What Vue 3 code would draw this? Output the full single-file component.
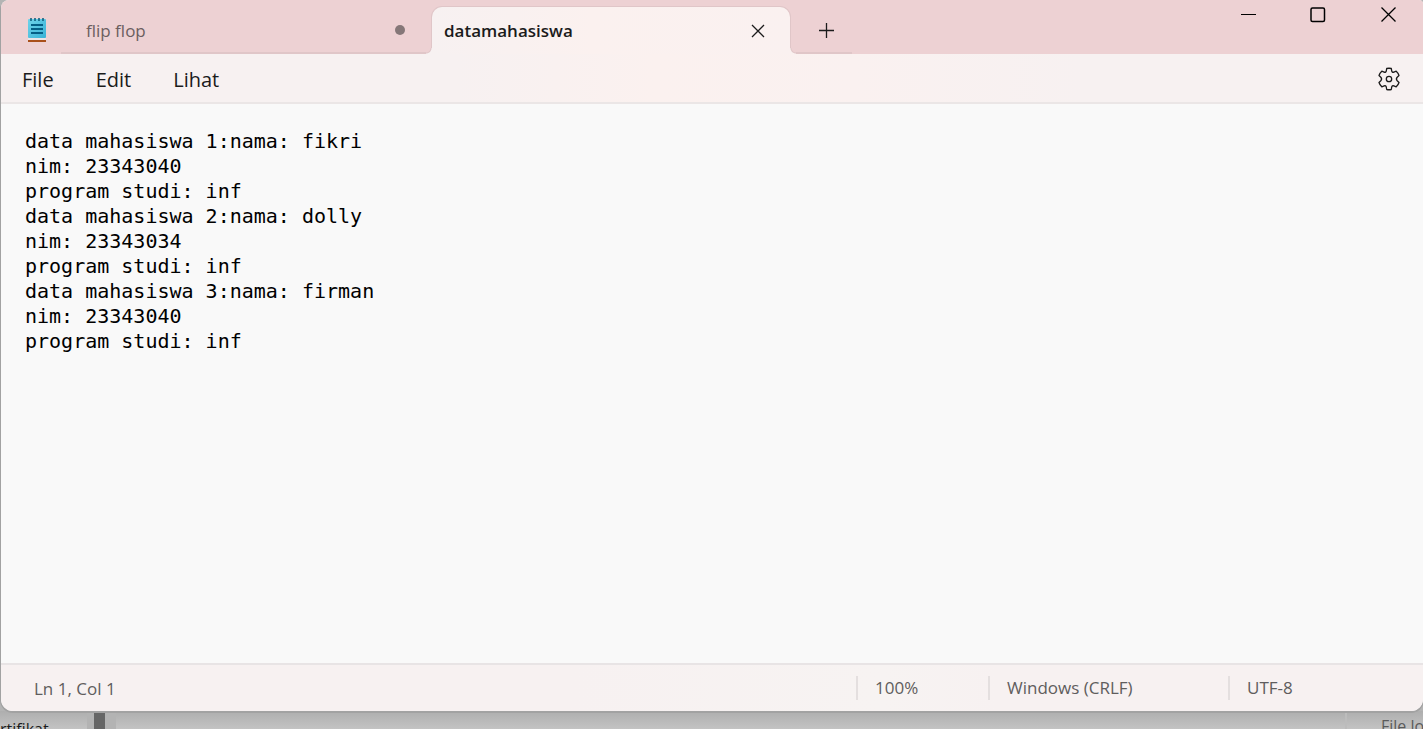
<script setup>
import { ref } from 'vue'

const content = ref(`data mahasiswa 1:nama: fikri
nim: 23343040
program studi: inf
data mahasiswa 2:nama: dolly
nim: 23343034
program studi: inf
data mahasiswa 3:nama: firman
nim: 23343040
program studi: inf`)
const menus = ['File', 'Edit', 'Lihat']
</script>

<template>
  <div class="desktop">
    <main class="window">
      <header class="titlebar">
        <svg class="app-icon" width="20" height="26" viewBox="0 0 20 26" aria-hidden="true">
          <defs>
            <linearGradient id="pad" x1="0" y1="0" x2="1" y2="1">
              <stop offset="0" stop-color="#6fd3ea" />
              <stop offset="1" stop-color="#38b2d6" />
            </linearGradient>
          </defs>
          <rect x="1" y="21" width="18" height="2" fill="#e9e4e6" />
          <rect x="1" y="23" width="18" height="2" fill="#a9501a" />
          <rect x="1" y="2" width="18" height="19" rx="1" fill="url(#pad)" />
          <path d="M4 1v3M8 1v3M12 1v3M16 1v3" stroke="#12607f" stroke-width="1.6" />
          <path d="M4 8h12M4 12h12M4 16h12" stroke="#055f86" stroke-width="2" />
        </svg>
        <nav class="tabs" aria-label="Tab">
          <button class="tab idle" type="button">
            <span>flip flop</span>
            <i class="dot"></i>
          </button>
          <div class="tab active">
            <button class="name" type="button">datamahasiswa</button>
            <button class="close" type="button" aria-label="Tutup tab">
              <svg width="14" height="14" viewBox="0 0 14 14"><path d="M1 1l12 12M13 1L1 13" /></svg>
            </button>
          </div>
          <button class="add" type="button" aria-label="Tab baru">
            <svg width="16" height="16" viewBox="0 0 16 16"><path d="M1 8.500h15M8.500 1v15" /></svg>
          </button>
        </nav>
        <div class="controls">
          <button type="button" aria-label="Minimalkan">
            <svg width="16" height="16" viewBox="0 0 16 16"><path d="M1 7.500h15" stroke-width="1" /></svg>
          </button>
          <button type="button" aria-label="Maksimalkan">
            <svg width="16" height="16" viewBox="0 0 16 16"><rect x="1" y="1" width="13.500" height="13.500" rx="1.500" stroke-width="1.500" /></svg>
          </button>
          <button type="button" aria-label="Tutup">
            <svg width="16" height="16" viewBox="0 0 16 16"><path d="M1.500 .5l14 14M15.500 .5l-14 14" /></svg>
          </button>
        </div>
      </header>

      <nav class="menubar" aria-label="Menu">
        <button v-for="m in menus" :key="m" type="button">{{ m }}</button>
        <button class="settings" type="button" aria-label="Pengaturan">
          <svg width="24" height="24" viewBox="0 0 24 24">
            <path stroke-linejoin="round" d="M9.700 1.500Q12 1 14.300 1.500L14.700 3.800Q15 5.700 16.900 5.100L19.200 4.200Q21.200 6 22 8.500L20.200 10.200Q18.600 12 20.200 13.800L22 15.500Q21.200 18 19.200 19.800L16.900 18.900Q15 18.300 14.700 20.200L14.300 22.500Q12 23 9.700 22.500L9.300 20.200Q9 18.300 7.100 18.900L4.800 19.800Q2.800 18 2 15.500L3.800 13.800Q5.400 12 3.800 10.200L2 8.500Q2.800 6 4.800 4.200L7.100 5.100Q9 5.700 9.300 3.800Z" />
            <circle cx="12" cy="12" r="2.700" />
          </svg>
        </button>
      </nav>

      <textarea v-model="content" class="editor" aria-label="Editor teks" spellcheck="false"></textarea>

      <footer class="status">
        <span class="position">Ln 1, Col 1</span>
        <span class="zoom">100%</span>
        <span class="eol">Windows (CRLF)</span>
        <span class="encoding">UTF-8</span>
      </footer>
    </main>
    <div class="behind">
      <span class="left-label">rtifikat</span>
      <i class="scroll"></i>
      <i class="pane"></i>
      <span class="right-label">File lo</span>
    </div>
  </div>
</template>

<style>
body {
  margin: 0;
}
</style>

<style scoped>
* {
  box-sizing: border-box;
}
.desktop {
  display: flex;
  flex-direction: column;
  height: 100vh;
  overflow: hidden;
  background: #b4b4b4;
  font-family: "Open Sans", "Noto Sans", sans-serif;
}
button {
  display: flex;
  align-items: center;
  padding: 0;
  border: 0;
  background: none;
  color: inherit;
  font: inherit;
}
svg {
  display: block;
  flex: none;
  fill: none;
  stroke: #1b1b1b;
  stroke-width: 1.3;
}
.app-icon {
  stroke: none;
  margin: 17px 14px 0 26px;
}
.window {
  flex: 1;
  min-height: 0;
  display: flex;
  flex-direction: column;
  margin-left: 1px;
  border-radius: 8px 4px 12px 12px;
  overflow: hidden;
  background: #f9f9f9;
  box-shadow: 0 1px 0 1px #a2a2a2;
  z-index: 1;
}
.titlebar {
  display: flex;
  flex: none;
  height: 54px;
  background: #edd1d3;
}
.tabs {
  display: flex;
  flex: 1;
  min-width: 0;
}
.tab {
  flex: 0 1 370px;
  display: flex;
  align-items: center;
  justify-content: space-between;
}
.idle {
  padding: 8px 26px 0 25px;
  border-bottom: 2px solid #e0c6c8;
  color: #6b5f60;
  font-size: 17px;
}
.dot {
  width: 10px;
  height: 10px;
  border-radius: 50%;
  background: #857778;
}
.active {
  position: relative;
  flex-basis: 360px;
  margin-top: 6px;
  padding: 0 25px 0 12px;
  border: 1px solid #e0c6c8;
  border-bottom: 0;
  border-radius: 11px 11px 0 0;
  background: linear-gradient(90deg, #f7f1f1, #fbf1ef 45%, #faf1f0);
  color: #1b1b1b;
  font-size: 17px;
  font-weight: 600;
}
.active::before,
.active::after {
  content: "";
  position: absolute;
  bottom: 0;
  width: 6px;
  height: 6px;
}
.active::before {
  right: 100%;
  background: radial-gradient(circle at 0 0, #edd1d3 4px, #e0c6c8 5px, #f7f1f1 6px);
}
.active::after {
  left: 100%;
  background: radial-gradient(circle at 100% 0, #edd1d3 4px, #e0c6c8 5px, #faf1f0 6px);
}
.add {
  width: 61px;
  padding: 8px 0 0 27px;
  border-bottom: 2px solid #e0c6c8;
}
.controls {
  display: flex;
  height: 30px;
}
.controls button {
  width: 70px;
  justify-content: center;
}
.controls svg {
  stroke: #000;
}
.menubar {
  display: flex;
  flex: none;
  gap: 42px;
  height: 50px;
  padding: 2px 22px 0 21px;
  border-bottom: 2px solid #ebe6e6;
  background: linear-gradient(90deg, #f7f1f1 32%, #fbf1ef 46%, #faf1f0 60%, #f7f1f1 76%);
  color: #1b1b1b;
  font-size: 20px;
}
.settings {
  margin-left: auto;
}
.editor {
  flex: 1;
  min-height: 0;
  padding: 25px 24px;
  border: 0;
  outline: 0;
  resize: none;
  background: #f9f9f9;
  color: #000;
  font: 20px/25px "DejaVu Sans Mono", monospace;
}
.status {
  display: flex;
  align-items: center;
  flex: none;
  height: 48px;
  border-top: 2px solid #e8e4e5;
  background: linear-gradient(90deg, #f7f1f1 40%, #f7f3f2 62%, #f7f1f1 70%);
  color: #605d5d;
  font-size: 17px;
}
.position {
  flex: 1;
  padding-left: 33px;
}
.zoom,
.eol,
.encoding {
  padding-left: 17px;
  border-left: 2px solid #e4dfdf;
  line-height: 24px;
}
.zoom {
  width: 132px;
}
.eol {
  width: 240px;
}
.encoding {
  width: 195px;
}
.behind {
  display: flex;
  flex: none;
  height: 18px;
  overflow: hidden;
  background: linear-gradient(#aeaeae, #c3c3c3);
  color: #1b1b1b;
  font-size: 16px;
  line-height: 36px;
}
.left-label {
  width: 87px;
}
.scroll {
  width: 29px;
  border: solid #b3b3b3;
  border-width: 0 11px 0 7px;
  background: #666;
}
.pane {
  flex: 1;
  border-right: 2px solid #bcbcbc;
}
.right-label {
  width: 76px;
  padding-left: 34px;
  overflow: hidden;
  white-space: nowrap;
  color: #5a5a5a;
  line-height: 30px;
}
</style>
